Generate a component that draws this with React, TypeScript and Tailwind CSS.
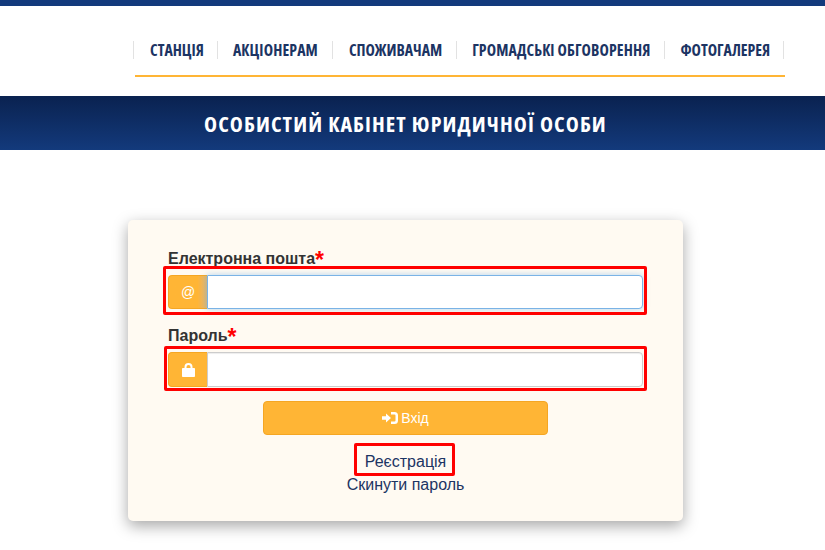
import React from 'react';

const navItems = [
  { label: 'СТАНЦІЯ', cls: 'pl-[16px] pr-[13px]' },
  { label: 'АКЦІОНЕРАМ', cls: 'px-[15px] pr-[14px] tracking-[0.12px]' },
  { label: 'СПОЖИВАЧАМ', cls: 'pl-[16px] pr-[14px]' },
  { label: 'ГРОМАДСЬКІ ОБГОВОРЕННЯ', cls: 'pl-[15px] pr-[14px] tracking-[0.12px]' },
  { label: 'ФОТОГАЛЕРЕЯ', cls: 'pl-[15px] pr-[13px]' },
];

const Required = () => <span className="text-[#f00] text-[23px] leading-[0] font-bold relative top-[4px]">*</span>;

export default function App() {
  return (
    <div className="w-[825px] h-[550px] overflow-hidden bg-white font-['Liberation_Sans',sans-serif]">
      <div className="h-[6px] bg-[#133a7c]" />

      <header className="h-[90px] pl-[135px] pt-[35px]">
        <div className="w-[650px] h-[34px] border-b-[2px] border-[#ffb535] box-content">
          <ul className="flex h-[18px] -ml-[2px] border-l border-[#e2e2e2] font-['Open_Sans',sans-serif] font-bold text-[15.8px] leading-[18px] text-[#1c3463] [font-stretch:75%]">
            {navItems.map(item => (
              <li key={item.label} className={`${item.cls} border-r border-[#e2e2e2] whitespace-nowrap`}>{item.label}</li>
            ))}
          </ul>
        </div>
      </header>

      <div className="h-[54px] bg-gradient-to-b from-[#0a2250] to-[#133a7c] pl-[204px] flex items-center">
        <h1 className="font-['Open_Sans',sans-serif] font-bold text-white text-[22px] tracking-[1.1px] whitespace-nowrap [font-stretch:75%]">
          ОСОБИСТИЙ КАБІНЕТ ЮРИДИЧНОЇ ОСОБИ
        </h1>
      </div>

      <div className="pl-[128px] pt-[70px]">
        <form className="relative w-[555px] h-[301px] bg-[#fffaf2] rounded-[5px] shadow-[0_5px_15px_rgba(0,0,0,0.35)] pl-[40px] pr-[40px] pt-[30px]">
          <label className="block h-[25px] text-[16px] leading-[18px] font-bold text-[#333]">
            Електронна пошта<Required />
          </label>
          <div className="flex h-[34px] relative">
            <span className="w-[39px] flex items-center justify-center bg-gradient-to-r from-[#ffb535] from-75% to-[#e2b56c] border border-[#f5a623] border-r-0 rounded-l-[4px] text-white text-[14px]">@</span>
            <input className="flex-1 min-w-0 bg-white border border-[#7ab3e6] rounded-r-[4px] outline-none shadow-[0_0_6px_rgba(102,175,233,0.5)]" />
            <div className="absolute -left-[5px] -right-[4px] -top-[9px] -bottom-[6px] border-[3px] border-[#f00] rounded-[2px] pointer-events-none" />
          </div>

          <label className="block mt-[18px] h-[25px] text-[16px] leading-[18px] font-bold text-[#333]">
            Пароль<Required />
          </label>
          <div className="flex h-[35px] relative">
            <span className="w-[39px] flex items-center justify-center bg-[#ffb535] border border-[#f5a623] border-r-0 rounded-l-[4px]">
              <svg width="13" height="14" viewBox="0 0 13 14" fill="#fff">
                <path d="M2.500 5V4a4 4 0 0 1 8 0v1h1.700c.5 0 .8.4.8.8v7.400c0 .5-.4.8-.8.8H.8c-.5 0-.8-.4-.8-.8V5.800C0 5.400.4 5 .8 5h1.700zm2 0h4V4a2 2 0 0 0-4 0v1z" />
              </svg>
            </span>
            <input type="password" className="flex-1 min-w-0 bg-white border border-[#ccc] rounded-r-[4px] outline-none shadow-[inset_0_1px_1px_rgba(0,0,0,0.075)]" />
            <div className="absolute -left-[4px] -right-[4px] -top-[6px] -bottom-[4px] border-[3px] border-[#f00] rounded-[2px] pointer-events-none" />
          </div>

          <div className="flex justify-center mt-[14px]">
            <button type="button" className="w-[285px] h-[34px] flex items-center justify-center gap-[3px] bg-[#ffb535] border border-[#f5a623] rounded-[4px] text-white text-[14px]">
              <svg width="16" height="12" viewBox="0 0 16 12" fill="#fff">
                <path d="M0 4.300h4V1.500L9 6l-5 4.500V7.700H0z" />
                <path d="M9 0h3.500A3.500 3.500 0 0 1 16 3.500v5a3.500 3.500 0 0 1-3.500 3.500H9V9.500h3.500a1 1 0 0 0 1-1v-5a1 1 0 0 0-1-1H9z" />
              </svg>
              Вхід
            </button>
          </div>

          <div className="mt-[15px] flex flex-col items-center text-[16px] leading-[23px] text-[#1c3463]">
            <a className="relative">
              Реєстрація
              <span className="absolute -left-[11px] -right-[9px] -top-[7px] -bottom-[3px] border-[3px] border-[#f00] rounded-[2px] pointer-events-none" />
            </a>
            <a>Скинути пароль</a>
          </div>
        </form>
      </div>
    </div>
  );
}
